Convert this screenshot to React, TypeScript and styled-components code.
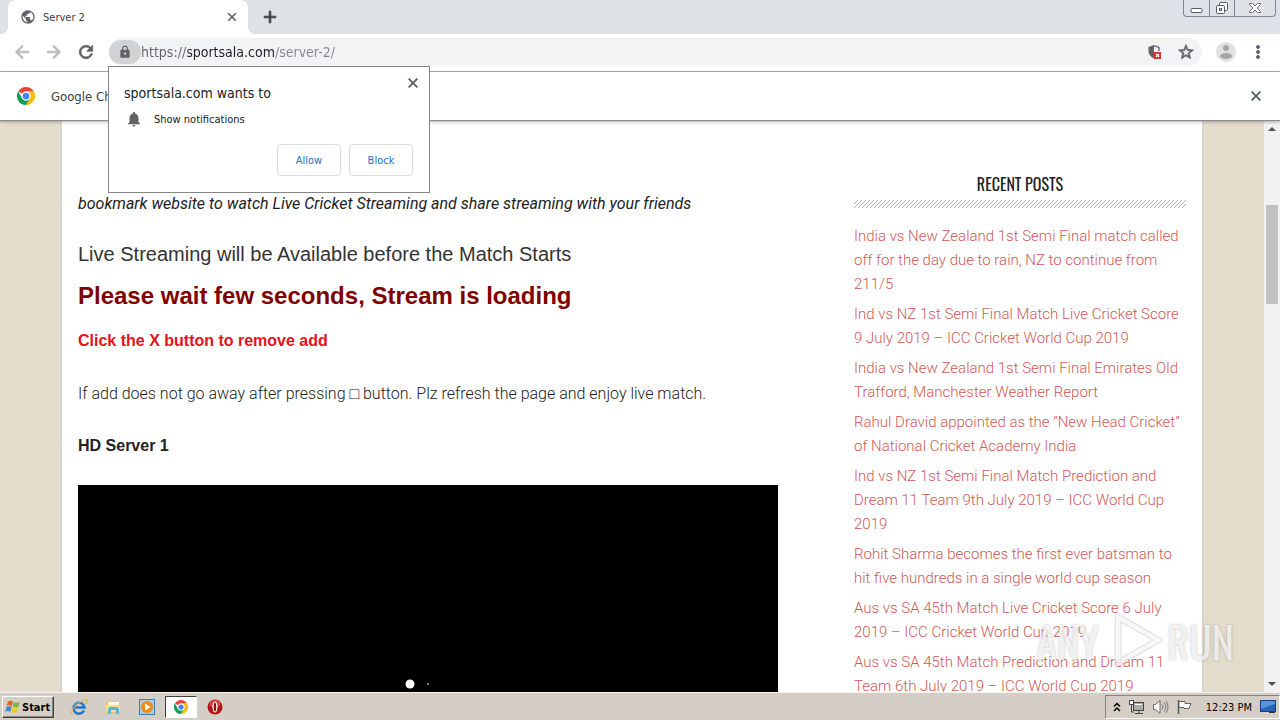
import React from "react";
import styled, { createGlobalStyle } from "styled-components";
import {
  MdAdd,
  MdArrowBack,
  MdArrowForward,
  MdClose,
  MdLock,
  MdMoreVert,
  MdNotifications,
  MdPublic,
  MdRefresh,
  MdStarBorder,
} from "react-icons/md";

const uiFont = `"DejaVu Sans Condensed", "DejaVu Sans", sans-serif`;
const pageFont = `"Liberation Sans", Arial, sans-serif`;
const lightFont = `Roboto, "Liberation Sans", sans-serif`;
const condensedFont = `Oswald, "Roboto Condensed", "Open Sans Condensed", Roboto, sans-serif`;

const GlobalStyle = createGlobalStyle`
  * { box-sizing: border-box; }
  body { margin: 0; font-family: ${pageFont}; overflow: hidden; }
  button { font: inherit; border: 0; background: none; padding: 0; margin: 0; color: inherit; cursor: pointer; }
  h1, h2, h3, p, ul { margin: 0; padding: 0; }
  svg { display: block; }
`;

const Desktop = styled.div`
  position: relative;
  display: flex;
  flex-direction: column;
  height: 100vh;
  overflow: hidden;
`;

/* Tab strip */
const TabStrip = styled.header`
  display: flex;
  flex: none;
  height: 34px;
  padding-left: 8px;
  background: #dee1e6;
  font-family: ${uiFont};
`;

const Tab = styled.div`
  position: relative;
  display: flex;
  align-items: center;
  gap: 7px;
  width: 240px;
  padding: 0 8px 0 12px;
  border-radius: 8px 8px 0 0;
  background: #fff;
  color: #3c4043;
  font-size: 11px;
  &::before,
  &::after {
    content: "";
    position: absolute;
    bottom: 0;
    width: 8px;
    height: 8px;
  }
  &::before {
    right: 100%;
    background: radial-gradient(circle at 0 0, transparent 8px, #fff 8px);
  }
  &::after {
    left: 100%;
    background: radial-gradient(circle at 100% 0, transparent 8px, #fff 8px);
  }
`;

const TabTitle = styled.span`
  flex: 1;
`;

const IconButton = styled.button<{ $tone?: string; $size?: number }>`
  display: flex;
  flex: none;
  align-items: center;
  justify-content: center;
  width: ${(p) => p.$size ?? 16}px;
  height: ${(p) => p.$size ?? 16}px;
  color: ${(p) => p.$tone ?? "#5f6368"};
  & > svg {
    flex: none;
  }
  & > svg[stroke="currentColor"] > path:not([fill="none"]) {
    stroke-width: 1;
  }
`;

const NewTab = styled(IconButton)`
  align-self: center;
  margin-left: 12px;
`;

const WindowControls = styled.div`
  display: flex;
  height: 17px;
  margin: 0 4px 0 auto;
  border: 1px solid #7f858f;
  border-top: 0;
  border-radius: 0 0 4px 4px;
`;

const WindowButton = styled.button<{ $wide?: boolean }>`
  display: flex;
  align-items: center;
  justify-content: center;
  width: ${(p) => (p.$wide ? 41 : 25)}px;
  & + & {
    border-left: 1px solid #7f858f;
  }
`;

/* Toolbar */
const Toolbar = styled.nav`
  display: flex;
  flex: none;
  align-items: center;
  height: 38px;
  padding: 0 12px 1px;
  border-bottom: 1px solid #a9abae;
  background: #fff;
`;

const NavButtons = styled.div`
  display: flex;
  gap: 12px;
`;

const Omnibox = styled.div`
  display: flex;
  flex: 1;
  align-items: center;
  height: 28px;
  margin: 0 14px 0 13px;
  padding-right: 8px;
  border-radius: 14px;
  background: #f1f3f4;
`;

const SiteInfo = styled.button`
  display: flex;
  align-items: center;
  justify-content: center;
  width: 32px;
  height: 24px;
  border-radius: 12px;
  background: #d0d2d4;
  color: #5f6368;
`;

const UrlInput = styled.input`
  flex: 1;
  min-width: 0;
  height: 24px;
  padding: 0;
  border: 0;
  outline: 0;
  font: 14px ${uiFont};
  color: transparent;
  background: linear-gradient(to right, #5f6368 0 47px, #202124 47px 133px, #80868b 133px);
  -webkit-background-clip: text;
  background-clip: text;
`;

const OmniActions = styled.div`
  display: flex;
  gap: 15px;
`;

const Avatar = styled.button`
  display: flex;
  margin-right: 12px;
`;

/* Information bar */
const InfoBar = styled.aside`
  position: relative;
  z-index: 1;
  display: flex;
  flex: none;
  align-items: center;
  gap: 16px;
  height: 49px;
  padding: 0 16px 0 17px;
  border-bottom: 1px solid #8d8d8d;
  background: #fff;
  box-shadow: 0 1px 3px rgba(0, 0, 0, 0.3);
  color: #3c4043;
  font: 13px ${uiFont};
`;

const InfoText = styled.span`
  flex: 1;
`;

/* Web page */
const Viewport = styled.div`
  display: flex;
  flex: 1;
  min-height: 0;
`;

const PageArea = styled.div`
  flex: 1;
  overflow: hidden;
  background: #e3dccc;
`;

const Sheet = styled.div`
  display: flex;
  justify-content: space-between;
  max-width: 1140px;
  margin: 0 auto;
  padding: 0 16px;
  background: #fff;
  box-shadow: 0 0 0 2px #ddd3ca;
`;

const Article = styled.main`
  flex: 0 1 700px;
  padding-top: 71px;
  color: #222;
  font-size: 16px;
  line-height: 24px;
`;

const Intro = styled.p`
  font-family: ${lightFont};
  font-style: italic;
  font-weight: 400;
`;

const Notice = styled.h2`
  margin-top: 23px;
  color: #333;
  font-size: 20px;
  font-weight: 400;
  line-height: 30px;
`;

const Loading = styled.h1`
  margin-top: 11px;
  color: #800000;
  font-size: 24px;
  line-height: 32px;
`;

const Warning = styled.h3`
  margin-top: 17px;
  color: #e8101c;
  font-size: 16px;
`;

const Help = styled.p`
  margin-top: 29px;
  font-family: ${lightFont};
  font-weight: 300;
`;

const ServerName = styled.h3`
  margin-top: 28px;
  font-size: 16px;
`;

const Player = styled.div`
  display: flex;
  align-items: flex-end;
  justify-content: center;
  height: 400px;
  margin-top: 27px;
  padding-bottom: 195px;
  background: #000;
`;

const Sidebar = styled.aside`
  flex: 0 0 332px;
  padding-top: 51px;
`;

const SidebarTitle = styled.h3`
  color: #222;
  font: 400 16px/24px ${condensedFont};
  text-align: center;
`;

const HatchRule = styled.svg`
  width: 100%;
  height: 8px;
  margin-top: 4px;
`;

const PostList = styled.ul`
  display: flex;
  flex-direction: column;
  gap: 6px;
  margin-top: 16px;
  list-style: none;
  font: 300 15px/24px ${lightFont};
`;

const PostLink = styled.a`
  color: #d05a55;
  text-decoration: none;
`;

const Scrollbar = styled.div`
  display: flex;
  flex: none;
  flex-direction: column;
  align-items: center;
  justify-content: space-between;
  width: 16px;
  background: #f1f1f1;
`;

const ScrollTrack = styled.div`
  flex: 1;
  padding-top: 68px;
`;

const ScrollThumb = styled.div`
  width: 12px;
  height: 99px;
  background: #c1c1c1;
`;

/* Permission prompt */
const Prompt = styled.section`
  position: absolute;
  z-index: 2;
  top: 66px;
  left: 108px;
  width: 322px;
  padding: 8px 8px 16px 15px;
  border: 1px solid #868686;
  background: #fff;
  color: #202124;
  font-family: ${uiFont};
`;

const PromptHead = styled.div`
  display: flex;
  align-items: flex-start;
  justify-content: space-between;
`;

const PromptTitle = styled.h2`
  padding-top: 8px;
  font-size: 14px;
  font-weight: 400;
  line-height: 20px;
`;

const PromptRow = styled.p`
  display: flex;
  align-items: center;
  gap: 11px;
  height: 16px;
  margin: 8px 0 17px;
  padding-left: 1px;
  font-size: 11px;
`;

const PromptActions = styled.div`
  display: flex;
  justify-content: flex-end;
  gap: 8px;
  padding-right: 8px;
`;

const PromptButton = styled.button`
  width: 64px;
  height: 32px;
  border: 1px solid #dadce0;
  border-radius: 4px;
  color: #1a73c8;
  font: 11px ${uiFont};
`;

/* Taskbar */
const Taskbar = styled.footer`
  display: flex;
  flex: none;
  align-items: center;
  height: 28px;
  padding: 1px 0 0 2px;
  border-top: 1px solid #f4f2ee;
  background: #d4cec6;
  font-family: ${uiFont};
`;

const StartButton = styled.button`
  display: flex;
  align-items: center;
  gap: 1px;
  width: 52px;
  height: 22px;
  padding-left: 2px;
  border: 1px solid;
  border-color: #fff #404040 #404040 #fff;
  box-shadow: inset -1px -1px #87847d;
  color: #000;
  font: bold 11px ${uiFont};
`;

const QuickLaunch = styled.div`
  display: flex;
  align-items: center;
  gap: 2px;
  margin-left: 9px;
`;

const TaskButton = styled.button<{ $active?: boolean }>`
  display: flex;
  align-items: center;
  justify-content: center;
  width: 32px;
  height: 22px;
  border: ${(p) => (p.$active ? "1px solid" : "0")};
  border-color: #404040 #fff #fff #404040;
  background: ${(p) => (p.$active ? "#fff" : "transparent")};
`;

const Tray = styled.div`
  display: flex;
  align-items: center;
  gap: 7px;
  height: 24px;
  margin-left: auto;
  padding: 0 3px 0 7px;
  border: 1px solid;
  border-color: #87847d #fff #fff #87847d;
  color: #000;
  font-size: 11px;
`;

const Clock = styled.time`
  padding: 0 1px 0 6px;
`;

/* Watermark */
const Watermark = styled.div`
  position: absolute;
  z-index: 3;
  right: 46px;
  bottom: 52px;
  display: flex;
  align-items: center;
  gap: 4px;
  color: rgba(255, 255, 255, 0.75);
  font: 400 42px/54px ${condensedFont};
  text-shadow: 0 0 3px rgba(90, 90, 90, 0.4);
  pointer-events: none;
`;

const Hatch = () => (
  <HatchRule aria-hidden="true">
    <defs>
      <pattern id="hatch" width="4" height="4" patternUnits="userSpaceOnUse">
        <path d="M-1 1 1-1M-1 5 5-1M3 5l2-2" stroke="#999" strokeWidth=".8" />
      </pattern>
    </defs>
    <rect width="100%" height="8" fill="url(#hatch)" />
  </HatchRule>
);

const ChromeLogo = ({ size }: { size: number }) => (
  <svg width={size} height={size} viewBox="0 0 48 48" aria-hidden="true">
    <path d="M24 0A24 24 0 0 1 44.8 12H24A12 12 0 0 0 13.6 18L3.2 12A24 24 0 0 1 24 0z" fill="#ea4335" />
    <path d="M44.8 12A24 24 0 0 1 24 48L34.4 30A12 12 0 0 0 24 12z" fill="#fbbc05" />
    <path d="M3.2 12A24 24 0 0 0 24 48L34.4 30A12 12 0 0 1 13.6 30z" fill="#0f9d58" />
    <circle cx="24" cy="24" r="12" fill="#fff" />
    <circle cx="24" cy="24" r="9" fill="#4285f4" />
  </svg>
);

const ShieldIcon = () => (
  <svg width="16" height="16" viewBox="0 0 16 16" aria-hidden="true">
    <path d="M7 1 1.500 3v4c0 3.500 2.200 6 5.500 7.500z" fill="#5f6368" />
    <path d="M7 1.700 12 3.500V7" fill="none" stroke="#5f6368" strokeWidth="1.300" />
    <rect x="7" y="8" width="7" height="7" fill="#d93025" />
    <path d="m9 10 3 3m0-3-3 3" stroke="#fff" strokeWidth="1.200" />
  </svg>
);

const AvatarIcon = () => (
  <svg width="20" height="20" viewBox="0 0 20 20" aria-hidden="true">
    <circle cx="10" cy="10" r="10" fill="#e0e0e0" />
    <circle cx="10" cy="6" r="3" fill="#a5a5a5" />
    <ellipse cx="10" cy="14" rx="6" ry="3" fill="#a5a5a5" />
  </svg>
);

const Minimize = () => (
  <svg width="13" height="16" viewBox="0 0 13 16" aria-hidden="true">
    <rect x="1" y="8.500" width="11" height="4" rx="1" fill="#fff" stroke="#555b66" />
  </svg>
);

const Restore = () => (
  <svg width="14" height="16" viewBox="0 0 14 16" fill="#fff" stroke="#555b66" aria-hidden="true">
    <rect x="4.500" y="2.500" width="8" height="8" rx="1" />
    <rect x="1.500" y="5.500" width="8" height="8" rx="1" />
    <rect x="4.500" y="8.500" width="2" height="2" />
  </svg>
);

const CloseGlyph = () => (
  <svg width="14" height="16" viewBox="0 0 14 16" aria-hidden="true">
    <path d="M1.500 3.500h3L7 6l2.500-2.500h3v1L9 8l3.500 3.500v1h-3L7 10l-2.500 2.500h-3v-1L5 8 1.500 4.500z" fill="#fff" stroke="#6b707a" />
  </svg>
);

const WindowsFlag = () => (
  <svg width="16" height="16" viewBox="0 0 16 16" aria-hidden="true">
    <path d="M3 2.500C5 1.200 6.500 1.600 8 2.600L6.800 7.200C5.300 6.200 3.600 6 1.700 7z" fill="#e8602c" />
    <path d="M8.800 3c1.800 1 3.600 1 6 0l-1.300 4.700c-2 .9-3.800.8-5.800-.2z" fill="#7ab83a" />
    <path d="M1.500 8c2-1 3.600-.8 5.100.1L5.300 12.700C3.900 11.700 2.200 11.600.2 12.600z" fill="#3f86d2" />
    <path d="M7.400 8.500c1.900 1 3.600 1.100 5.800.2L12 13.300c-2.200.9-4 .8-5.900-.2z" fill="#f6c42c" />
  </svg>
);

const ExplorerIcon = () => (
  <svg width="18" height="18" viewBox="0 0 18 18" fill="none" aria-hidden="true">
    <path d="M14 12.500A5.500 5.500 0 1 1 14.500 9.500H4.500" stroke="#1e78c8" strokeWidth="2.500" />
    <path d="M13.500 5A6 6 0 0 0 4 7" stroke="#6dc0f2" />
    <path d="M2 16C0 13 8 3 16.500 1.500c1 1 0 3-1 4" stroke="#e7b43b" strokeWidth="1.200" />
  </svg>
);

const FolderIcon = () => (
  <svg width="18" height="18" viewBox="0 0 18 18" aria-hidden="true">
    <path d="M2 3h5l1 2h8v10H2z" fill="#e6c55c" />
    <path d="M4 4h11v4H4z" fill="#fffbe0" />
    <path d="M2 7h14v7H2z" fill="#f6e08a" />
    <path d="M4 16v-4c0-2 1-3 3-3h5c2 0 3 1 3 3v4h-3v-4H7v4z" fill="#55b5de" />
  </svg>
);

const MediaIcon = () => (
  <svg width="16" height="16" viewBox="0 0 16 16" aria-hidden="true">
    <rect x=".5" y=".5" width="15" height="15" fill="#a8cdec" stroke="#3c7fb8" />
    <circle cx="8" cy="8" r="6" fill="#f28a14" />
    <path d="M6 4.500v7L11.500 8z" fill="#fff" />
  </svg>
);

const OperaIcon = () => (
  <svg width="16" height="16" viewBox="0 0 16 16" aria-hidden="true">
    <circle cx="8" cy="8" r="7.500" fill="#b01414" />
    <ellipse cx="8" cy="5" rx="5.500" ry="4" fill="#d84848" />
    <ellipse cx="8" cy="8" rx="2.500" ry="5.500" fill="#fff" />
    <ellipse cx="8" cy="8" rx="1.200" ry="4.500" fill="#8e1010" />
  </svg>
);

const ChevronsUp = () => (
  <svg width="8" height="10" viewBox="0 0 8 10" fill="none" stroke="#000" strokeWidth="1.500" aria-hidden="true">
    <path d="m1 4.500 3-3 3 3M1 9l3-3 3 3" />
  </svg>
);

const NetworkIcon = () => (
  <svg width="17" height="16" viewBox="0 0 17 16" aria-hidden="true">
    <rect x="5.500" y="3.500" width="10" height="8" fill="#aaa" stroke="#444" />
    <path d="M7 14.500h8M11 12v2" stroke="#444" />
    <rect x="1.500" y="1.500" width="4" height="4" fill="#fff" stroke="#444" />
    <path d="M3.500 6v7H6" fill="none" stroke="#444" />
    <path d="M7 5h7v1H7z" fill="#fff" />
  </svg>
);

const SpeakerIcon = () => (
  <svg width="17" height="16" viewBox="0 0 17 16" aria-hidden="true">
    <path d="M1.500 5.500h2L8 1.500v13l-4.500-4h-2z" fill="#fff" stroke="#666" />
    <path d="M10 5.500q2 2.500 0 5M12 3.500q3.500 4.500 0 9M14 2q4 6 0 12" fill="none" stroke="#777" />
  </svg>
);

const FlagIcon = () => (
  <svg width="17" height="16" viewBox="0 0 17 16" aria-hidden="true">
    <path d="M2.500 1v14" stroke="#555" strokeWidth="1.500" />
    <path d="M3 2.500h6v2h6l-2 5H8v-1H3z" fill="#fff" stroke="#666" />
  </svg>
);

const DesktopIcon = () => (
  <svg width="16" height="14" viewBox="0 0 16 14" aria-hidden="true">
    <rect x=".5" y=".5" width="15" height="11" fill="#2565b8" stroke="#174079" />
    <path d="M1 1h14v3L1 9z" fill="#5595dd" />
    <path d="M9 12h6v1H9z" fill="#333" />
  </svg>
);

const ScrollArrow = ({ down }: { down?: boolean }) => (
  <svg width="16" height="16" viewBox="0 0 16 16" aria-hidden="true">
    <path d={down ? "M4 6h8l-4 4z" : "M4 10h8L8 6z"} fill="#505050" />
  </svg>
);

const PlayOutline = () => (
  <svg width="60" height="54" viewBox="0 0 60 54" fill="none" stroke="rgba(255,255,255,.7)" strokeWidth="4" aria-hidden="true">
    <path d="M15 3v46l40-23z" stroke="rgba(130,130,130,.2)" strokeWidth="7" />
    <path d="M15 3v46l40-23z" />
    <path d="M22 18v18l16-10zM12 7H6v38" strokeWidth="3" />
  </svg>
);

const LoadingDots = () => (
  <svg width="48" height="12" viewBox="0 0 48 12" fill="#fff" aria-hidden="true">
    <circle cx="6" cy="6" r="4.500" />
    <circle cx="24" cy="6" r="1" opacity=".6" />
  </svg>
);

const posts = [
  "India vs New Zealand 1st Semi Final match called off for the day due to rain, NZ to continue from 211/5",
  "Ind vs NZ 1st Semi Final Match Live Cricket Score 9 July 2019 – ICC Cricket World Cup 2019",
  "India vs New Zealand 1st Semi Final Emirates Old Trafford, Manchester Weather Report",
  "Rahul Dravid appointed as the “New Head Cricket” of National Cricket Academy India",
  "Ind vs NZ 1st Semi Final Match Prediction and Dream 11 Team 9th July 2019 – ICC World Cup 2019",
  "Rohit Sharma becomes the first ever batsman to hit five hundreds in a single world cup season",
  "Aus vs SA 45th Match Live Cricket Score 6 July 2019 – ICC Cricket World Cup 2019",
  "Aus vs SA 45th Match Prediction and Dream 11 Team 6th July 2019 – ICC World Cup 2019",
];

export default function App() {
  return (
    <Desktop>
      <GlobalStyle />
      <TabStrip>
        <Tab>
          <MdPublic size={16} color="#5f6368" />
          <TabTitle>Server 2</TabTitle>
          <IconButton aria-label="Close tab">
            <MdClose size={14} />
          </IconButton>
        </Tab>
        <NewTab aria-label="New tab" $size={20} $tone="#3c4043">
          <MdAdd size={20} />
        </NewTab>
        <WindowControls>
          <WindowButton aria-label="Minimize"><Minimize /></WindowButton>
          <WindowButton aria-label="Restore"><Restore /></WindowButton>
          <WindowButton aria-label="Close" $wide><CloseGlyph /></WindowButton>
        </WindowControls>
      </TabStrip>
      <Toolbar>
        <NavButtons>
          <IconButton aria-label="Back" $size={20} $tone="#babcbe"><MdArrowBack size={20} /></IconButton>
          <IconButton aria-label="Forward" $size={20} $tone="#babcbe"><MdArrowForward size={20} /></IconButton>
          <IconButton aria-label="Reload" $size={20}><MdRefresh size={20} /></IconButton>
        </NavButtons>
        <Omnibox>
          <SiteInfo aria-label="Site information"><MdLock size={14} /></SiteInfo>
          <UrlInput aria-label="Address" defaultValue="https://sportsala.com/server-2/" />
          <OmniActions>
            <IconButton aria-label="Blocked content"><ShieldIcon /></IconButton>
            <IconButton aria-label="Bookmark"><MdStarBorder size={18} /></IconButton>
          </OmniActions>
        </Omnibox>
        <Avatar aria-label="Profile"><AvatarIcon /></Avatar>
        <IconButton aria-label="Menu" $size={20}><MdMoreVert size={20} /></IconButton>
      </Toolbar>
      <InfoBar>
        <ChromeLogo size={18} />
        <InfoText>Google Ch</InfoText>
        <IconButton aria-label="Dismiss"><MdClose size={16} /></IconButton>
      </InfoBar>
      <Viewport>
        <PageArea>
          <Sheet>
            <Article>
              <Intro>bookmark website to watch Live Cricket Streaming and share streaming with your friends</Intro>
              <Notice>Live Streaming will be Available before the Match Starts</Notice>
              <Loading>Please wait few seconds, Stream is loading</Loading>
              <Warning>Click the X button to remove add</Warning>
              <Help>If add does not go away after pressing □ button. Plz refresh the page and enjoy live match.</Help>
              <ServerName>HD Server 1</ServerName>
              <Player><LoadingDots /></Player>
            </Article>
            <Sidebar>
              <SidebarTitle>RECENT POSTS</SidebarTitle>
              <Hatch />
              <PostList>
                {posts.map((post) => (
                  <li key={post}><PostLink href="#">{post}</PostLink></li>
                ))}
              </PostList>
            </Sidebar>
          </Sheet>
        </PageArea>
        <Scrollbar>
          <ScrollArrow />
          <ScrollTrack><ScrollThumb /></ScrollTrack>
          <ScrollArrow down />
        </Scrollbar>
      </Viewport>
      <Taskbar>
        <StartButton><WindowsFlag />Start</StartButton>
        <QuickLaunch>
          <TaskButton aria-label="Internet Explorer"><ExplorerIcon /></TaskButton>
          <TaskButton aria-label="File Explorer"><FolderIcon /></TaskButton>
          <TaskButton aria-label="Media Player"><MediaIcon /></TaskButton>
          <TaskButton aria-label="Chrome" $active><ChromeLogo size={14} /></TaskButton>
          <TaskButton aria-label="Opera"><OperaIcon /></TaskButton>
        </QuickLaunch>
        <Tray>
          <ChevronsUp />
          <NetworkIcon />
          <SpeakerIcon />
          <FlagIcon />
          <Clock>12:23 PM</Clock>
          <DesktopIcon />
        </Tray>
      </Taskbar>
      <Prompt aria-label="Notification permission">
        <PromptHead>
          <PromptTitle>sportsala.com wants to</PromptTitle>
          <IconButton aria-label="Close prompt"><MdClose size={16} /></IconButton>
        </PromptHead>
        <PromptRow><MdNotifications size={18} color="#5f6368" />Show notifications</PromptRow>
        <PromptActions>
          <PromptButton>Allow</PromptButton>
          <PromptButton>Block</PromptButton>
        </PromptActions>
      </Prompt>
      <Watermark>
        <span>ANY</span>
        <PlayOutline />
        <span>RUN</span>
      </Watermark>
    </Desktop>
  );
}
